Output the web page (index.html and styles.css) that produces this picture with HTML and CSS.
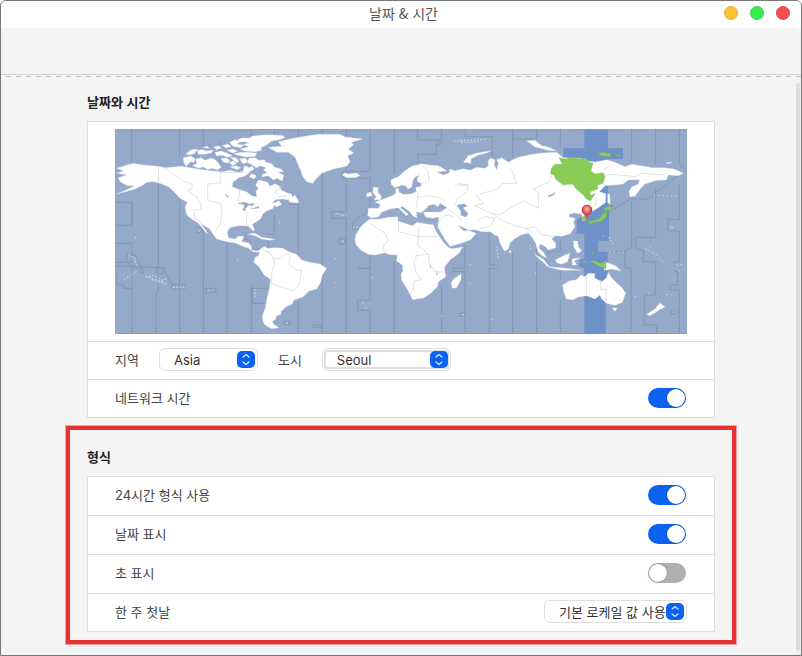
FILE: index.html
```html
<!DOCTYPE html>
<html lang="ko">
<head>
<meta charset="utf-8">
<meta name="viewport" content="width=device-width, initial-scale=1">
<title>날짜 &amp; 시간</title>
<link rel="stylesheet" href="styles.css">
</head>
<body>
<div class="window">
  <header class="titlebar">
    <h1 class="window-title">날짜 &amp; 시간</h1>
    <div class="window-controls">
      <button class="control minimize" type="button" aria-label="최소화"></button>
      <button class="control maximize" type="button" aria-label="최대화"></button>
      <button class="control close" type="button" aria-label="닫기"></button>
    </div>
  </header>
  <div class="toolbar"></div>
  <svg class="divider" aria-hidden="true"><line x1="5" y1="1.5" x2="100%" y2="1.5" stroke="#bcbcbc" stroke-dasharray="5 5"/></svg>
  <main class="content">
    <section class="group">
      <h2 class="heading">날짜와 시간</h2>
      <div class="card">
        <div class="map-row">
          <svg class="map" viewBox="0 0 1716 615" role="img" aria-label="시간대 지도">
            <rect width="1716" height="615" fill="#95a9ca"/>
            <g transform="translate(0 -12)">
              <path fill="#6d91c8" d="M1408 12H1479V70H1524V102H1479V240L1496 240L1482 256V347H1450V380H1478V440L1472 462V627H1408V430L1394 425V405L1408 400V326H1385V285L1408 270V102H1345V70H1408Z"/>
              <g fill="none" stroke="#8393b0" stroke-width="2.500">
                <path d="M50 12V190M50 232V300M0 232H51V301H0M0 355H51V415M51 425V480L51 627M0 412H48M0 423H58L78 442H86L60 390L35 388V405L48 422M51 425L145 428L170 478H210V492H170V480M0 448H5V480H25V490H50M130 173V500H123V627M194 210V627M265 310V627M336 352V627M409 480V627M314 45V130M194 12V100M265 12V70M409 12V40M410 490H461M412 490V535H460M272 490H303V503H272ZM124 428H148V445H124ZM244 308H260V322H244M508 589H526V598H508Z"/>
                <path d="M478 270V327H455M405 325H392V345H405V372H440M460 345V370M550 12V35M550 210V627M478 12V35M622 12V40M622 145V627M694 12V139M694 160V260H650V280H694V627M765 12V139H682V160H765V255L713 292V312H732M672 341H690V357H672ZM765 285V291M765 390V430H728V430H765V526H728V556H765V627M595 600H620V607H595ZM520 212H548V238H520"/>
                <path d="M838 12V145M838 410V627M908 12V45H975V60H964V88H908V117M980 12V50M980 480V627M965 45V60M1050 12V35H1132V128M1050 362V430H1015V440H1050V627M1035 565H1052V573H1035ZM1193 12V95M1193 380V627M1265 12V42H1194M1265 355V385M1265 405V627M1123 325V420H1146V430H1123V627M1336 12V70M1336 350V380H1298V385M1336 435V462M1336 525V627M1385 12L1408 12"/>
                <path d="M1550 12V115M1550 230V370L1530 375V430H1548V627M1479 380H1530M1622 12V120M1622 190V337H1562V372L1585 375V410H1622V510H1588V540V600H1625V627M1693 12V115L1710 135M1693 180L1693 283H1658V318H1693V410H1680V440H1688V480H1665V495H1693V627M1480 262L1545 222L1600 222L1625 200L1690 150M1668 557H1680V566H1668Z"/>
              </g>
              <g fill="#fff" stroke="#dfe5ee" stroke-width="1">
                <!-- North America -->
                <path d="M5 130L28 122L55 115L85 120L130 124L150 128L200 124L235 130L285 137L320 140L345 136L370 142L385 138L388 122L400 126L406 138L398 148L385 155L370 160L353 172L352 185L370 193L395 200L411 213L425 215L423 200L430 190L422 180L430 165L445 168L458 172L465 184L480 176L492 182L500 196L512 202L530 208L532 215L540 210L550 225V234L525 232L520 224L500 222L480 224L470 236L492 227L500 238L485 246L478 240L475 250L455 258L443 268L438 280L425 290L412 298L418 312L416 319L408 312L400 303L370 302L345 308L337 320L340 338L360 343L369 334L386 334L380 350L402 354L408 362L410 375L425 378L438 374L432 382L415 380L400 370L380 362L360 354L335 350L305 342L292 325L284 312L268 302L257 295L280 327L272 322L250 294L234 285L215 270L210 245L217 232L195 220L175 198L160 185L135 175L115 170L95 172L85 180L60 192L32 200L5 207L35 194L57 182L38 182L15 170L10 158L35 150L5 144L26 138Z"/>
                <!-- Arctic archipelago -->
                <path d="M205 98L228 94L240 101L238 112L226 110L214 124L206 112ZM242 103L258 98L270 106L290 99L300 104L312 116L318 128L306 135L290 130L278 134L266 126L250 129L232 122L246 116ZM212 88L226 76L246 72L240 84L226 90ZM246 76L262 74L274 78L296 75L288 84L268 88L250 88ZM262 68L276 64L284 70ZM296 66L312 62L320 70L304 74ZM300 82L318 78L336 84L352 92L338 97L322 91L304 93ZM318 101L334 99L344 105L340 114L326 112ZM342 112L356 108L364 116L352 122ZM346 96L364 99L372 108L364 114L354 104ZM322 62L338 57L348 64L334 69ZM336 76L352 72L368 78L354 84Z"/>
                <path d="M356 86L376 82L400 82L426 84L420 94L396 96L374 92ZM344 52L360 44L376 50L366 58L386 60L376 68L354 64ZM372 52L368 44L384 38L400 40L414 33L440 30L470 29L505 32L510 38L492 44L470 48L455 60L438 68L440 76L420 80L388 78L376 72L400 66L386 58L404 54L388 50ZM374 102L392 98L398 112L384 116ZM402 100L420 98L432 106L448 104L452 111L470 116L478 126L498 132L506 140L488 142L506 150L502 168L486 160L476 165L460 152L440 156L442 148L456 144L445 134L454 128L436 122L424 128L408 118L396 112ZM396 130L412 124L418 132L404 140ZM408 146L424 152L418 162L403 156ZM346 126L362 122L378 128L366 134Z"/>
                <!-- Greenland and Iceland -->
                <path d="M460 67L500 64L490 50L535 40L570 34L610 28L675 28L690 36L742 42L710 52L715 60L700 72L716 84L698 92L705 110L695 124L655 132L620 145L602 163L593 175L575 170L562 152L558 138L548 116L540 96L520 82L486 82ZM682 150L690 143L700 147L725 144L735 152L720 158L696 158Z"/>
                <!-- Caribbean -->
                <path d="M397 327L420 325L440 337L460 340L480 343L462 346L440 342L420 332Z"/>
                <!-- South America -->
                <path d="M435 373L450 364L456 370L480 368L505 370L520 380L545 388L560 405L585 412L615 417L635 430L622 450L617 472L605 492L582 498L565 515L548 522L538 524L530 538L512 546L503 556L498 558V568L485 572L482 582L472 590L476 598L492 608L470 611L450 600L444 590L442 572L450 552L455 525L462 495L467 463L447 450L432 425L416 412L420 398L432 390Z"/>
                <!-- Africa -->
                <path d="M765 282L790 283L820 277L849 275L848 288L870 295L893 302L905 292L930 296L955 299L963 318L980 345L998 366L1010 371L1043 366L1032 385L1005 405L988 427L992 455L970 470L967 485L945 507L925 519L893 524L885 508L875 490L860 466L858 447L864 438L862 420L845 408L847 390L825 389L810 384L780 390L760 388L740 377L723 360L720 342L723 328L740 302L754 290ZM1030 452L1038 447L1038 464L1025 488L1012 490L1008 474L1016 462Z"/>
                <!-- Europe and Asia -->
                <path d="M760 250L790 250L797 240L780 231L805 222L832 212L842 205V192L850 189L852 202L865 208L887 207L904 200L902 187L920 184L917 178L942 172L922 176L908 170L906 160L914 150L900 156L894 166L890 186L879 193L874 184L862 180L840 188L828 178V164L850 155L870 137L890 124L920 116L945 120L970 122L997 138L965 140L985 150L1002 144L1005 132L1020 137L1045 131L1065 136L1085 127L1110 130L1120 122V105L1130 99L1140 105L1138 120L1145 135L1150 115L1145 104L1160 98L1180 112L1192 105L1210 97L1250 88L1280 84L1325 82L1345 98L1395 100L1420 108L1440 111L1475 104L1500 112L1530 125L1550 118L1580 122L1610 128L1650 128L1680 133L1705 145L1690 152L1660 150L1654 165L1625 166L1590 177L1575 193L1560 213L1545 216L1542 200L1550 186L1570 177L1574 164L1540 165L1523 178L1470 182L1453 200L1472 206V232L1450 248L1430 260L1415 270L1418 284L1404 288L1400 268L1378 264L1362 268L1364 276L1380 280L1376 292L1380 305L1366 326L1340 334L1322 332L1310 342L1322 355V368L1300 375L1290 364L1275 357L1272 370L1285 381L1295 398L1282 393L1269 380L1262 355L1250 336L1240 324L1218 330L1198 342L1184 355L1182 371L1169 379L1156 357L1149 333L1138 330L1128 320L1100 320L1080 314L1060 315L1040 305L1028 300L1046 318L1060 316L1084 325L1067 344L1035 356L1005 364L990 343L968 306L970 294L972 277L952 280L932 276L925 262L940 261L975 261L990 253L960 254L935 250L918 263L904 260L906 278L895 274L884 260L862 244L856 248L880 268L874 272L850 248L825 252L800 262L790 276L770 279L758 272Z"/>
                <!-- British Isles -->
                <path d="M775 186L790 188L788 200L800 215L796 224L776 224L784 216L774 202ZM755 205L768 202L772 212L755 216Z"/>
                <!-- Arctic islands -->
                <path d="M1045 112L1060 92L1090 83L1127 77L1115 84L1090 90L1068 102L1068 115ZM1235 48L1260 46L1280 62L1300 66L1325 78L1300 76L1260 66L1248 56ZM1478 206L1484 208L1486 238L1478 232ZM1652 113L1672 112L1660 116Z"/>
                <!-- Southeast Asia -->
                <path d="M1256 386L1285 403L1303 425L1355 430L1400 436L1340 436L1300 426ZM1321 405L1350 390L1365 385L1358 410L1340 418L1326 413ZM1371 402L1396 398L1378 408L1386 420L1372 420ZM1376 348L1388 348L1390 365L1400 378L1388 385L1376 365ZM1186 374L1189 382L1182 383ZM1468 410L1502 422L1518 438L1492 432L1468 436Z"/>
                <!-- Oceania -->
                <path d="M1343 480L1362 468L1385 464L1398 450L1410 455L1420 445L1440 446L1438 458L1460 470L1474 460L1480 443L1490 458L1504 473L1520 487L1532 505L1522 532L1500 541L1474 535L1460 522L1455 510L1440 522L1415 512L1390 516L1375 524L1354 522L1346 500ZM1491 549L1507 549L1500 559ZM1635 534L1643 540L1650 546L1636 553L1622 562L1604 572L1595 568L1620 552Z"/>
              </g>
              <g fill="#95a9ca">
                <!-- Lakes and inland seas -->
                <path d="M937 254L938 242L958 238L968 246L976 235L996 248L985 254ZM1025 240L1048 236L1057 244L1044 248L1060 266L1053 277L1037 271V257ZM368 236L385 231L404 236L420 235L412 243L400 240L388 258L382 254L390 240ZM403 253L425 246L435 242L430 250ZM328 205L340 213L338 220ZM368 158L390 156L386 164ZM1296 214L1318 204L1323 197L1319 208L1306 215ZM943 415L950 430L945 427ZM965 435L968 450H964Z"/>
              </g>
              <g fill="none" stroke="#cdd0d3" stroke-width="2">
                <!-- Zone borders on land -->
                <path d="M130 124V173M150 128L170 145L210 170L230 176L232 190L218 196L245 215L258 240V252L238 256V280L257 292M385 142H316V174L278 177V226L315 235L322 250L315 300L300 320M375 190L370 228L385 240L395 262V300M505 180L480 200L490 215L515 212"/>
                <path d="M440 373L463 382L475 400L498 400L512 385L525 392L522 418L545 436H560L552 480L535 498L512 490L470 476V440L480 420L475 400"/>
                <path d="M850 290V320L912 335H965M912 302L908 360L940 388L942 410L960 440L990 442M765 295L810 325L820 345L805 365L808 385M905 390L898 410L902 440L920 464L895 470V495L880 510M904 392L940 388"/>
                <path d="M908 208L905 250M908 218L940 212L980 220L990 230M920 120L940 140L942 170M1020 180H1060L1055 200L1028 220L1018 240M1030 175L1058 180M995 250L1020 268L1040 285M960 300L990 270L1020 275M1095 208L1150 190L1160 175H1205L1195 145L1185 130M1085 210L1105 235L1080 243L1130 265L1155 270L1200 240L1225 228L1270 250V205L1255 192L1305 170L1310 150M1130 265L1160 285L1195 300L1230 310L1250 320M1090 285L1110 275L1140 280L1125 305L1095 310M1230 310L1260 305L1280 330L1320 335M1435 150L1460 155L1490 148L1560 155L1580 145L1650 150M1465 135L1480 125M1415 265L1440 240L1445 220"/>
                <path d="M1414 455V512M1457 465V493H1473V535"/>
              </g>
              <g fill="#8acb56" stroke="#79b65d" stroke-width="1">
                <path d="M1332 98L1352 102L1362 98L1395 101L1412 100L1422 110L1434 114L1431 126L1428 138L1440 147L1465 143L1470 154L1465 175L1448 180V192L1426 200L1425 211L1442 206L1434 215L1427 228L1414 222L1405 210L1394 200L1382 190L1374 178L1358 178L1345 180L1331 170L1320 160L1318 150L1306 146L1310 128L1320 118L1342 118Z"/>
                <path d="M1450 88L1460 82L1490 86L1485 95L1460 92ZM1495 87L1518 90L1510 94ZM1470 248L1485 242L1492 250L1482 257L1468 256ZM1420 291L1440 284L1453 282L1462 268L1475 258L1474 276L1458 290L1435 292L1425 299ZM1402 276L1412 268L1416 283L1406 287ZM1425 408L1440 407L1455 415L1473 411V432L1455 424L1442 418ZM1431 382L1435 380L1431 390ZM1405 408L1418 411L1404 413Z"/>
              </g>
              <!-- Small islands -->
              <g fill="none" stroke="#dce5ef" stroke-width="3" stroke-linecap="round">
                <path stroke-dasharray="2 8" d="M1018 48L1050 46L1110 43M1040 52L1090 50M28 463L63 440M42 390L58 398L64 420M94 455L118 452L140 465L158 460M112 465L155 478M102 458L142 470M175 488L210 488M420 493V522M663 265L685 271M684 348L692 353M715 307L738 307M1145 365L1150 400M1245 360L1247 378M1482 338L1495 358"/>
                <path stroke-dasharray="1 12" d="M1485 380L1530 382M1618 210L1690 214M1590 370L1618 385L1645 410M1595 375L1615 360M1684 420L1705 418M1680 430L1700 440M1678 465L1688 462M1655 510L1668 508"/>
                <path d="M61 338h1M252 318h1M493 292h1M367 406h1M280 497h1M516 594h2M660 401h1M662 473h1M772 458h1M743 535h1M752 548h1M980 572h1M1042 569h3M1065 420h1M1065 475h1M1132 583h1M1143 425h1M1261 445h1M1668 307h6M1560 515h1M1674 561h1M1600 505h1M1465 334h1"/>
              </g>
              <!-- Selected city -->
              <path d="M1408 265L1416 289L1424 265Z" fill="#b36b5b"/>
              <circle cx="1416" cy="255" r="14" fill="#e06469" stroke="#c33c43" stroke-width="4"/>
              <circle cx="1416" cy="252" r="7" fill="#efa2a4" stroke="#e98287" stroke-width="2"/>
            </g>
            <path d="M0 1H1716M0 614H1716" stroke="#8799b6" stroke-width="2"/>
          </svg>
        </div>
        <div class="row location">
          <label for="region">지역</label>
          <span class="picker picker-region">
            <select id="region"><option>Asia</option></select>
            <svg class="stepper" viewBox="0 0 18 18" aria-hidden="true"><rect width="18" height="17" rx="5"/><path d="M6 6L9 3.500L12 6M6 11L9 13.500L12 11"/></svg>
          </span>
          <label for="city">도시</label>
          <span class="picker picker-city active">
            <select id="city"><option>Seoul</option></select>
            <svg class="stepper" viewBox="0 0 18 18" aria-hidden="true"><rect width="18" height="17" rx="5"/><path d="M6 6L9 3.500L12 6M6 11L9 13.500L12 11"/></svg>
          </span>
        </div>
        <div class="row">
          <label for="network-time">네트워크 시간</label>
          <input class="switch" id="network-time" type="checkbox" role="switch" checked>
        </div>
      </div>
    </section>
    <section class="group highlighted">
      <h2 class="heading">형식</h2>
      <div class="card">
        <div class="row">
          <label for="use-24h">24시간 형식 사용</label>
          <input class="switch" id="use-24h" type="checkbox" role="switch" checked>
        </div>
        <div class="row">
          <label for="show-date">날짜 표시</label>
          <input class="switch" id="show-date" type="checkbox" role="switch" checked>
        </div>
        <div class="row">
          <label for="show-seconds">초 표시</label>
          <input class="switch" id="show-seconds" type="checkbox" role="switch">
        </div>
        <div class="row">
          <label for="first-day">한 주 첫날</label>
          <span class="picker picker-day">
            <select id="first-day"><option>기본 로케일 값 사용</option></select>
            <svg class="stepper" viewBox="0 0 18 18" aria-hidden="true"><rect width="18" height="17" rx="5"/><path d="M6 6L9 3.500L12 6M6 11L9 13.500L12 11"/></svg>
          </span>
        </div>
      </div>
    </section>
  </main>
  <div class="scroll-thumb"></div>
</div>
</body>
</html>
```
FILE: styles.css
```css
* {
  box-sizing: border-box;
}

body {
  margin: 0;
  background: #fff;
  color: #444;
  font: 13px/20px Inter, "Noto Sans CJK KR", sans-serif;
}

.window {
  position: relative;
  display: flex;
  flex-direction: column;
  min-height: 100vh;
  border: 1px solid #777;
  border-radius: 6px 6px 0 0;
  background: #f4f4f4;
  overflow: hidden;
}

.titlebar {
  display: grid;
  grid-template-columns: 1fr auto 1fr;
  align-items: center;
  height: 27px;
  padding: 0 11px 3px;
  background: #fff;
}

.window-title {
  grid-column: 2;
  margin: 0;
  padding-left: 5px;
  color: #555;
  font: 400 14px/20px "Noto Sans CJK KR", sans-serif;
}

.window-controls {
  display: flex;
  justify-content: flex-end;
  gap: 12px;
}

.control {
  width: 14px;
  height: 14px;
  padding: 0;
  border: 1px solid;
  border-radius: 50%;
}

.minimize {
  border-color: #dfad3c;
  background: #fbc334;
}

.maximize {
  border-color: #35cf49;
  background: #39eb4b;
}

.close {
  border-color: #d94a50;
  background: #f44e56;
}

.toolbar {
  height: 47px;
  border-bottom: 1px solid #d4d4d4;
}

.divider {
  display: block;
  width: 100%;
  height: 3px;
}

.content {
  flex: 1;
  padding: 14px 86px 11px;
}

.heading {
  margin: 0 0 9px;
  color: #222;
  font: 700 13px/20px "Noto Sans CJK KR", sans-serif;
}

.card {
  border: 1px solid #dedede;
  background: #fff;
}

.map-row {
  padding: 7px 27px;
}

.map {
  display: block;
  width: 100%;
  height: auto;
}

.row {
  display: flex;
  align-items: center;
  justify-content: space-between;
  height: 39px;
  padding: 0 28px 2px 27px;
}

.row:first-child,
.row:last-child {
  height: 38px;
}

.row + .row,
.location {
  border-top: 1px solid #dedede;
}

.location {
  height: 38px;
  justify-content: flex-start;
  gap: 20px;
}

.highlighted {
  margin: 8px -21px 0;
  padding: 17px;
  padding-bottom: 8px;
  border: 4px solid #e63232;
  box-shadow: 0 0 0 1px #f4a0a0;
}

.picker {
  position: relative;
  display: block;
}

.picker select {
  display: block;
  width: 100%;
  height: 23px;
  padding: 0 20px 0 14px;
  border: 1px solid #dedede;
  border-radius: 6px;
  outline: 0;
  background: #fff;
  color: #333;
  font: inherit;
  appearance: none;
}

.picker.active select {
  box-shadow: inset 0 0 0 1px #fff, inset 0 0 0 3px #dedede;
}

.picker-region {
  width: 99px;
}

.picker-city {
  width: 129px;
}

.picker-day {
  width: 143px;
  margin-right: -1px;
}

.stepper {
  position: absolute;
  top: 3px;
  right: 3px;
  width: 18px;
  height: 18px;
  fill: #0b62f0;
  pointer-events: none;
}

.stepper path {
  fill: none;
  stroke: #dfeaff;
  stroke-width: 1.2;
  stroke-linecap: round;
  stroke-linejoin: round;
}

.switch {
  display: flex;
  width: 38px;
  height: 20px;
  margin: 0;
  padding: 1px;
  border-radius: 10px;
  background: #b0b0b0;
  appearance: none;
}

.switch::before {
  content: "";
  width: 18px;
  height: 18px;
  border-radius: 50%;
  background: #fff;
  box-shadow: 0 0 2px #0006;
}

.switch:checked {
  justify-content: flex-end;
  background: #0b62f0;
}

.scroll-thumb {
  position: absolute;
  top: 82px;
  right: 1px;
  bottom: 4px;
  width: 4px;
  border-radius: 2px;
  background: #dcdcdc;
}
```
